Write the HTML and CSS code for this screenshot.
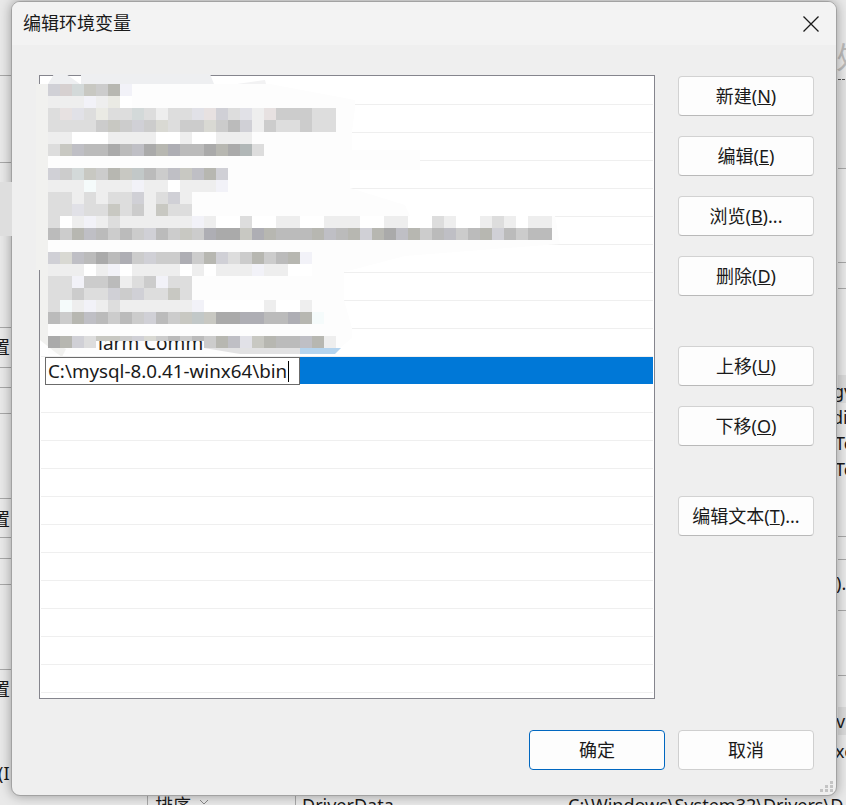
FILE: index.html
```html
<!DOCTYPE html>
<html lang="zh">
<head>
  <meta charset="UTF-8" />
  <title>编辑环境变量</title>
  <link rel="stylesheet" href="styles.css">
</head>
<body>

  <!-- the window lying behind the dialog -->
  <svg class="behind" width="846" height="805">
    <rect x="838" y="80" width="8" height="88" fill="#e2e2e2" />
    <rect x="838" y="375" width="8" height="28" fill="#dadada" />
    <rect x="838" y="707" width="8" height="28" fill="#dadada" />
    <g stroke="#a8a8a8">
      <path d="M0 75.5H11M0 162.5H11M0 327.5H11M0 367.5H11M0 387.5H11M0 413.5H11M0 498.5H11M0 537.5H11M0 558.5H11M0 584.5H11M0 669.5H11" />
      <path d="M838 168.5H846M838 262.5H846M838 288.5H846M838 536.5H846M838 559.5H846M838 610.5H846M838 675.5H846" />
      <path d="M147.5 796V805M295.5 796V805" />
    </g>
    <path d="M838 79.5H846" stroke="#555" stroke-dasharray="3 1" />
    <g class="behind-text">
      <text x="-8" y="354">置</text>
      <text x="-8" y="526">置</text>
      <text x="-8" y="696">置</text>
      <text x="-2" y="780">(I</text>
      <text x="833" y="398">gv</text>
      <text x="832" y="424">di</text>
      <text x="835" y="450">Te</text>
      <text x="835" y="476">Te</text>
      <text x="836" y="590">).</text>
      <text x="836" y="728">v</text>
      <text x="835" y="758">xe</text>
      <text x="155" y="812">排序</text>
      <text x="302" y="812">DriverData</text>
      <text x="568" y="812">C:\Windows\System32\Drivers\D</text>
    </g>
    <path d="M200 800L204 804L208 800" stroke="#888" fill="none" />
    <text class="behind-faint" x="836" y="68">处</text>
  </svg>

  <div class="dialog">
    <div class="titlebar">
      <span class="title">编辑环境变量</span>
      <svg class="close" width="16" height="16" viewBox="0 0 16 16">
        <path d="M0.5 0.5L15.5 15.5M15.5 0.5L0.5 15.5" />
      </svg>
    </div>

    <div class="content">
      <div class="main">
        <ul class="list">
          <li></li><li></li><li></li><li></li><li></li>
          <li></li><li></li><li></li><li></li><li></li>
          <li class="selected"><span class="edit">C:\mysql-8.0.41-winx64\bin<i class="caret"></i></span></li>
          <li></li><li></li><li></li><li></li><li></li>
          <li></li><li></li><li></li><li></li><li></li><li></li>
        </ul>

        <div class="side">
          <button class="btn">新建(<u>N</u>)</button>
          <button class="btn">编辑(<u>E</u>)</button>
          <button class="btn">浏览(<u>B</u>)...</button>
          <button class="btn">删除(<u>D</u>)</button>
          <button class="btn push">上移(<u>U</u>)</button>
          <button class="btn">下移(<u>O</u>)</button>
          <button class="btn push">编辑文本(<u>T</u>)...</button>
        </div>
      </div>

      <div class="footer">
        <button class="btn default">确定</button>
        <button class="btn flat">取消</button>
      </div>
    </div>

    <svg class="grip" width="14" height="12" viewBox="0 0 14 12">
      <path d="M10 0h3v3h-3zM5 4h3v3H5zM10 4h3v3h-3zM0 8h3v3H0zM5 8h3v3H5zM10 8h3v3h-3z" />
    </svg>
  </div>

  <!-- the smudged-out part of the list, in page coordinates -->
  <svg class="smudge" width="846" height="805">
    <defs>
      <clipPath id="peek-clip">
        <rect x="96" y="341" width="108" height="14" />
      </clipPath>
    </defs>
    <rect x="0" y="182" width="12" height="54" fill="#dedede" />
    <polygon points="81,74 210,74 214,84 81,84" fill="#eeeff1" />
    <polygon points="54,74 66,74 80,84 48,84" fill="#eeeff1" />
    <polygon points="237,84 265,80 266,84" fill="#f2f2f3" />
    <polygon points="48,84 270,84 355,100 355,108 352,132 352,150 420,150 420,170 350,170 350,188 405,205 410,216 555,216 560,244 405,256 344,272 344,300 352,328 352,338 340,348 300,354 48,354" fill="#fdfdfd" />
    <polygon points="36,84 48,84 48,340 66,349 62,357 55,352 40,340 40,270 36,270" fill="#f1f1ef" />
    <g id="tiles"></g>
    <rect x="96" y="341" width="108" height="14" fill="#fdfdfd" />
    <text class="peek" x="98" y="350" clip-path="url(#peek-clip)">larm Comm</text>
    <polygon points="204,348 300,348 300,354 240,354" fill="#e2e2e3" />
    <polygon points="300,348 341,348 335,354 300,354" fill="#b5d4ee" />
  </svg>

  <script src="mosaic.js"></script>
</body>
</html>
```

FILE: styles.css
```css
* {
  box-sizing: border-box;
}

body {
  margin: 0;
  width: 846px;
  height: 805px;
  padding: 1px 9px 9px 11px;
  position: relative;
  overflow: hidden;
  background-color: #e9e9e9;
  font-family: "Noto Sans", "Noto Sans CJK SC", sans-serif;
  font-size: 18px;
  color: #1a1a1a;
}

.behind, .smudge {
  position: absolute;
  top: 0;
  left: 0;
}

.behind-text {
  font-family: "Noto Sans", "Noto Sans CJK SC", sans-serif;
  font-size: 18px;
  fill: #1a1a1a;
}

.behind-faint {
  font-family: "Noto Sans CJK SC", sans-serif;
  font-size: 30px;
  fill: #bbb;
}

.peek {
  font-size: 19px;
  fill: #1a1a1a;
}

.dialog {
  position: relative;
  width: 826px;
  height: 795px;
  background-color: #efefef;
  border: 1px solid #a2a2a2;
  border-radius: 9px;
  box-shadow: 0 0 12px rgba(0,0,0,0.35);
  overflow: hidden;
}

.titlebar {
  height: 43px;
  padding: 0 17px 0 11px;
  display: flex;
  align-items: center;
  justify-content: space-between;
  background-color: #f3f3f3;
}

.title {
  line-height: 43px;
}

.close path {
  stroke: #1a1a1a;
  stroke-width: 1.3;
  fill: none;
}

.content {
  padding: 30px 22px 0 27px;
}

.main {
  display: flex;
  gap: 23px;
}

.list {
  width: 616px;
  height: 624px;
  margin: 0;
  padding: 1px 1px 0;
  list-style: none;
  background-color: white;
  border: 1px solid #85858d;
}

.list li {
  height: 28px;
  border-bottom: 1px solid #efefef;
}

.list li.selected {
  padding-left: 4px;
  background-color: #0078d7;
  background-clip: padding-box;
  border-bottom-color: white;
}

.edit {
  display: block;
  width: 255px;
  height: 28px;
  padding-left: 2px;
  font-size: 18.8px;
  line-height: 26px;
  white-space: nowrap;
  background-color: white;
  border: 1px solid #6b6b6b;
  box-shadow: -4px 0 0 white;
}

.caret {
  display: inline-block;
  width: 1px;
  height: 21px;
  margin-left: 1px;
  vertical-align: -4px;
  background-color: black;
}

.side {
  display: flex;
  flex-direction: column;
  gap: 20px;
  padding-top: 1px;
}

.btn {
  width: 136px;
  height: 40px;
  padding: 0 0 2px;
  font: inherit;
  color: inherit;
  background-color: #fdfdfd;
  border: 1px solid #d2d2d2;
  border-bottom-color: #b9b9b9;
  border-radius: 4px;
}

.btn.push {
  margin-top: 30px;
}

.btn.flat {
  border-color: #cfcfcf;
}

.btn.default {
  border-color: #0067c0;
}

.footer {
  display: flex;
  justify-content: flex-end;
  gap: 13px;
  margin-top: 31px;
}

.grip {
  position: absolute;
  right: 2px;
  bottom: 2px;
  fill: #c4c4c4;
}
```

FILE: mosaic.js
```js
// one entry per row of tiles: top y, then one colour per 12px tile starting at x=48
var rows = [
  [84, "ccd dcc cdd ccb ccc bba eef"],
  [96, "eee eee eee eef eee eed fff"],
  [108, "ddd edd dde ddd eed ddd ddd cdd ddd eee ddd ddd dde edd ccd ddd dde eee edd ccc ccc ccc ddd ddd"],
  [120, "ddd ddd ddd ddd ccc ccb ccc ccd ccc ddc ddd ccc ccc ddc ccc bbb ccd eee ccc ddd ddd ccc ddd ddd"],
  [132, "eee eee fff fff fff eee eee eee eee fff fff eee fff fff eee eee eee"],
  [144, "ddd ccb bbc bbb bbb aaa bbb bbc aaa bba aab bbb bbb aaa bba aaa abb ddd"],
  [168, "ccd ccc cdd ccb ccc bba ccb bcc bbb ccc bbc ccb bbc bba ccd"],
  [180, "eee eee eee eff eee eee eee eef eee eee fff eee eee eee eef"],
  [192, "ddd ddd eee ddd eee ddd ddd ccd eee ddd ccd eee"],
  [204, "ddd ddd dde ddd ddd ccb ddd ccc eee ccb ddd ddd"],
  [216, "ddd fff eee eef eee ddd eee eee eee eee eee eee eef eee fff fff ddd fff fff eee eee fff fff eee eee eee fff fff eee eee fff fff ddd eee fff fff eee ddd eee fff eee eee"],
  [228, "bbb ccc bba bbc bbb ccc bbb ccc ccd bbb ccc ccb ccc aab aaa aaa ccb aab bba bbb bbb bbb bba bbc bbb bba ccd bba aaa bbc bba ccc bbb bbc ccc bbb bba ccd bbb ccc bbb bbb"],
  [252, "ccd ddc bbc bbb aaa bbb aab ccc ccd ccc ccc aab ccc bba ccd ddd ccc bba ccc bbb bba eef"],
  [264, "eee eee eee fff eee eef fff eee eee eee eee fff eee fff eee eee eee eef eee eee fff fff"],
  [276, "ddd ddd eef ccc ccc bbb eee ddd ccc eef ddd ddd"],
  [288, "ddd ddd ccc ddd ddd ccd ccc ccd ddd ddd ccb ddd"],
  [300, "ddd eff eee eef eee ddd eee eee eee eee eee eee eef fff fff fff fff fff eee fff fff eee"],
  [312, "bbb ccc bba bbc bbb ccc bbb ccc ccd bbb ccc ccb bcc ccb aaa aaa aab aab bbb bbb aab bba eff"],
  [336, "aaa bba ccd ddd ccb ccb ccc ccd ddc ccc bbb ccc bbb ccc bba bbc dde ccb bba bbb bbb bbc bba eee"]
];

var tiles = document.getElementById("tiles");

// three hex digits overstate the tint of these greys, so pull each one back towards its mean
function soften(colour) {
  var rgb = colour.split("").map(function (d) { return parseInt(d, 16) * 17; });
  var mean = (rgb[0] + rgb[1] + rgb[2]) / 3;
  var out = rgb.map(function (v) { return Math.round(mean + (v - mean) * 0.35); });
  return "rgb(" + out.join(",") + ")";
}

rows.forEach(function (row) {
  row[1].split(" ").forEach(function (colour, i) {
    var r = document.createElementNS("http://www.w3.org/2000/svg", "rect");
    r.setAttribute("x", 48 + i * 12);
    r.setAttribute("y", row[0]);
    r.setAttribute("width", 12);
    r.setAttribute("height", 12);
    r.setAttribute("fill", soften(colour));
    tiles.appendChild(r);
  });
});
```
